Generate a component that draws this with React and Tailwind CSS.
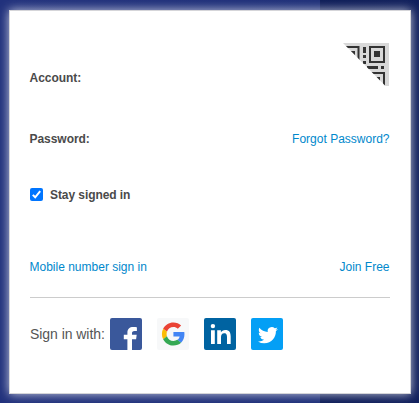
import React from "react";

function QrCorner() {
  return (
    <svg width="46" height="43" viewBox="0 0 46 43" aria-label="QR code sign in">
      <defs>
        <clipPath id="corner">
          <path d="M0 0H46V43H42.5Z" />
        </clipPath>
      </defs>
      <g clipPath="url(#corner)">
        <rect width="46" height="43" fill="#d8d8d8" />
        <g fill="none" stroke="#333" strokeWidth="2">
          <rect x="0" y="4" width="15.5" height="15" />
          <rect x="27" y="4" width="14" height="15" />
          <rect x="26" y="30" width="15" height="14" />
        </g>
        <g fill="#333">
          <rect x="6" y="8" width="6" height="6" />
          <rect x="31" y="8" width="6" height="6" />
          <rect x="31" y="34" width="6" height="6" />
          <rect x="20" y="4" width="3" height="6" />
          <rect x="20" y="12" width="3" height="3" />
          <rect x="20" y="18" width="3" height="3" />
          <rect x="24" y="23" width="11" height="3" />
          <rect x="38" y="23" width="3" height="3" />
        </g>
      </g>
    </svg>
  );
}

function Facebook() {
  return (
    <svg width="32" height="32" viewBox="0 0 32 32" aria-label="Facebook">
      <rect width="32" height="32" rx="2" fill="#3a589b" />
      <path d="M17.4 32V21.2h-3.6v-4.5h3.6v-2c0-3.8 2.2-5.7 5.9-5.7 1.6 0 3 .1 3.6.2v3.9h-2.4c-2 0-2.5.9-2.5 2.3v1.3h4.7l-.6 4.5H22V32Z" fill="#fff" />
    </svg>
  );
}

function Google() {
  return (
    <svg width="32" height="32" viewBox="0 0 32 32" aria-label="Google">
      <rect width="32" height="32" rx="2" fill="#f7f8f9" />
      <g transform="translate(4.9 4.5) scale(.48)">
        <path fill="#ea4335" d="M24 9.5c3.54 0 6.71 1.22 9.21 3.6l6.85-6.85C35.9 2.38 30.47 0 24 0 14.62 0 6.51 5.38 2.56 13.22l7.98 6.19C12.43 13.72 17.74 9.5 24 9.5z" />
        <path fill="#4285f4" d="M46.98 24.55c0-1.57-.15-3.09-.38-4.55H24v9.02h12.94c-.58 2.96-2.26 5.48-4.78 7.18l7.73 6c4.51-4.18 7.09-10.36 7.09-17.65z" />
        <path fill="#fbbc05" d="M10.53 28.59c-.48-1.45-.76-2.99-.76-4.59s.27-3.14.76-4.59l-7.98-6.19C.92 16.46 0 20.12 0 24c0 3.88.92 7.54 2.56 10.78l7.97-6.19z" />
        <path fill="#34a853" d="M24 48c6.48 0 11.93-2.13 15.89-5.81l-7.73-6c-2.15 1.45-4.92 2.3-8.16 2.3-6.26 0-11.57-4.22-13.47-9.91l-7.98 6.19C6.51 42.62 14.62 48 24 48z" />
      </g>
    </svg>
  );
}

function LinkedIn() {
  return (
    <svg width="32" height="32" viewBox="0 0 32 32" aria-label="LinkedIn">
      <rect width="32" height="32" rx="2" fill="#0063a1" />
      <g fill="#fff">
        <circle cx="8.9" cy="8.1" r="2.2" />
        <path d="M7 12.3h3.8V26H7zM13.2 12.3h3.7v1.9c.7-1.3 2.2-2.3 4.3-2.3 4.3 0 5.5 2.7 5.5 6.7V26H23v-6.7c0-2-.3-4.1-2.8-4.1-2.4 0-3.2 1.9-3.2 4V26h-3.8Z" />
      </g>
    </svg>
  );
}

function Twitter() {
  return (
    <svg width="32" height="32" viewBox="0 0 32 32" aria-label="Twitter">
      <rect width="32" height="32" rx="2" fill="#049ff5" />
      <path
        transform="translate(7 7.2) scale(.83)"
        fill="#fff"
        d="M23.953 4.57a10 10 0 01-2.825.775 4.958 4.958 0 002.163-2.723c-.951.555-2.005.959-3.127 1.184a4.92 4.92 0 00-8.384 4.482C7.69 8.095 4.067 6.13 1.64 3.162a4.822 4.822 0 00-.666 2.475c0 1.71.87 3.213 2.188 4.096a4.904 4.904 0 01-2.228-.616v.06a4.923 4.923 0 003.946 4.827 4.996 4.996 0 01-2.212.085 4.936 4.936 0 004.604 3.417 9.867 9.867 0 01-6.102 2.105c-.39 0-.779-.023-1.17-.067a13.995 13.995 0 007.557 2.209c9.053 0 13.998-7.496 13.998-13.985 0-.21 0-.42-.015-.63A9.935 9.935 0 0024 4.59z"
      />
    </svg>
  );
}

export default function App() {
  return (
    <div className="h-[403px] w-[419px] overflow-hidden bg-[linear-gradient(90deg,#21317c_0,#1d2e78_320px,#0c1b57_320px,#101f5c_100%)] pt-[10px] pl-[9px] font-['Liberation_Sans',Arial,sans-serif] text-xs leading-4 text-[#0088cc]">
      <main className="flex h-96 w-[402px] flex-col border border-[#d5d5d9] bg-white pr-5 pl-5 pt-8 shadow-[0_0_10px_rgba(255,255,255,0.75)]">
        <div className="flex h-[43px] items-end justify-between pr-px">
          <span className="-ml-[0.5px] font-bold tracking-[-0.04px] text-[#4a4a4a]">Account:</span>
          <QrCorner />
        </div>
        <div className="mt-[45px] flex justify-between pr-[0.5px]">
          <span className="-ml-[0.5px] font-bold tracking-[-0.04px] text-[#4a4a4a]">Password:</span>
          <a>Forgot Password?</a>
        </div>
        <label className="mt-10 flex items-center gap-[7px] font-bold tracking-[-0.07px] text-[#4a4a4a]">
          <svg width="13" height="13" viewBox="0 0 13 13" className="-mt-px">
            <rect width="13" height="13" rx="2" fill="#0075ff" />
            <path d="M2.8 6.9 5.2 9.3 10.2 3.2" fill="none" stroke="#fff" strokeWidth="2" />
          </svg>
          Stay signed in
        </label>
        <div className="mt-14 flex justify-between pr-[0.5px]">
          <a className="-ml-[0.5px]">Mobile number sign in</a>
          <a>Join Free</a>
        </div>
        <div className="mt-[22px] flex border-t border-[#ccc] pt-5">
          <span className="w-20 self-center whitespace-nowrap text-sm leading-4 tracking-[-0.05px] text-[#555]">Sign in with:</span>
          <div className="flex gap-[15px]">
            <Facebook />
            <Google />
            <LinkedIn />
            <Twitter />
          </div>
        </div>
      </main>
    </div>
  );
}
